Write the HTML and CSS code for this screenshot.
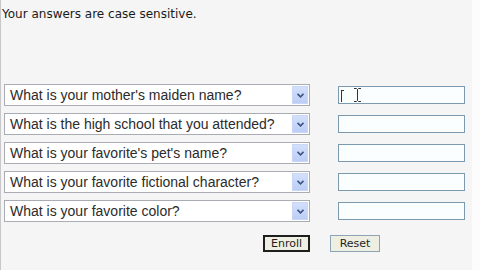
FILE: index.html
```html
<!DOCTYPE html>
<html>
<head>
    <title>Security Questions</title>
    <link rel="stylesheet" href="styles.css">
</head>
<body>
    <div class="page">
        <p class="note">Your answers are case sensitive.</p>

        <form class="questions">
            <div class="row">
                <div class="select">
                    <span class="select-text">What is your mother's maiden name?</span>
                    <span class="select-btn"><svg width="7" height="5" viewBox="0 0 7 5"><path d="M0.5 0.8 L3.5 3.8 L6.5 0.8" fill="none" stroke="#3d5480" stroke-width="1.6"/></svg></span>
                </div>
                <div class="answer-cell">
                    <input type="text" class="answer">
                    <svg class="ibeam" width="9" height="14" viewBox="0 0 9 14"><path d="M1 0.5 H3.5 L4.5 1.5 L5.5 0.5 H8 M4.5 1.5 V12.5 M1 13.5 H3.5 L4.5 12.5 L5.5 13.5 H8" fill="none" stroke="#333" stroke-width="1"/></svg>
                    <span class="caret"></span>
                </div>
            </div>
            <div class="row">
                <div class="select">
                    <span class="select-text">What is the high school that you attended?</span>
                    <span class="select-btn"><svg width="7" height="5" viewBox="0 0 7 5"><path d="M0.5 0.8 L3.5 3.8 L6.5 0.8" fill="none" stroke="#3d5480" stroke-width="1.6"/></svg></span>
                </div>
                <div class="answer-cell"><input type="text" class="answer"></div>
            </div>
            <div class="row">
                <div class="select">
                    <span class="select-text">What is your favorite's pet's name?</span>
                    <span class="select-btn"><svg width="7" height="5" viewBox="0 0 7 5"><path d="M0.5 0.8 L3.5 3.8 L6.5 0.8" fill="none" stroke="#3d5480" stroke-width="1.6"/></svg></span>
                </div>
                <div class="answer-cell"><input type="text" class="answer"></div>
            </div>
            <div class="row">
                <div class="select">
                    <span class="select-text">What is your favorite fictional character?</span>
                    <span class="select-btn"><svg width="7" height="5" viewBox="0 0 7 5"><path d="M0.5 0.8 L3.5 3.8 L6.5 0.8" fill="none" stroke="#3d5480" stroke-width="1.6"/></svg></span>
                </div>
                <div class="answer-cell"><input type="text" class="answer"></div>
            </div>
            <div class="row">
                <div class="select">
                    <span class="select-text">What is your favorite color?</span>
                    <span class="select-btn"><svg width="7" height="5" viewBox="0 0 7 5"><path d="M0.5 0.8 L3.5 3.8 L6.5 0.8" fill="none" stroke="#3d5480" stroke-width="1.6"/></svg></span>
                </div>
                <div class="answer-cell"><input type="text" class="answer"></div>
            </div>

            <div class="buttons">
                <button type="submit" class="btn btn-default">Enroll</button>
                <button type="reset" class="btn btn-reset">Reset</button>
            </div>
        </form>
    </div>
</body>
</html>
```

FILE: styles.css
```css
body {
    margin: 0;
    background-color: #fcfcfc;
    font-family: "DejaVu Sans", Verdana, sans-serif;
}
.page {
    width: 472px;
    height: 270px;
    background-color: #f5f5f5;
    border-left: 1px solid #c8c8c8;
    box-sizing: border-box;
}
.note {
    margin: 0;
    padding: 7px 0 0 1px;
    font-size: 12px;
    line-height: 14px;
    color: #1a1a1a;
}
.questions {
    margin-top: 63px;
    padding-left: 3px;
}
.row {
    display: flex;
    align-items: center;
    margin-bottom: 7px;
}
.select {
    display: flex;
    align-items: center;
    width: 306px;
    height: 22px;
    box-sizing: border-box;
    border: 1px solid #a9adb3;
    background-color: #fff;
    padding: 1px;
}
.select-text {
    flex: 1;
    padding-left: 4px;
    font-family: "Liberation Sans", Arial, sans-serif;
    font-size: 14px;
    color: #2b2b2b;
    white-space: nowrap;
    overflow: hidden;
}
.select-btn {
    display: flex;
    align-items: center;
    justify-content: center;
    width: 16px;
    height: 18px;
    background: linear-gradient(#d3e0fb, #bccdf7);
    border: 1px solid #c9d7f6;
    box-sizing: border-box;
}
.answer-cell {
    position: relative;
    margin-left: 28px;
}
.answer {
    display: block;
    width: 127px;
    height: 18px;
    box-sizing: border-box;
    border: 1px solid #7c9aae;
    background-color: #fbfeff;
    padding: 0;
}
.ibeam {
    position: absolute;
    left: 15px;
    top: 2px;
}
.caret {
    position: absolute;
    left: 3px;
    top: 4px;
    width: 2px;
    height: 11px;
    border-left: 1px solid #333;
    border-top: 1px solid #333;
}
.buttons {
    display: flex;
    gap: 20px;
    padding-left: 259px;
    margin-top: 13px;
}
.btn {
    width: 47px;
    height: 17px;
    padding: 0;
    font-family: "DejaVu Sans", Verdana, sans-serif;
    font-size: 11px;
    color: #1e1e1e;
    background-color: #efeee2;
    border: 1px solid #8ca3b3;
    line-height: 13px;
}
.btn-default {
    border: 2px solid #1e1e1e;
}
.btn-reset {
    width: 50px;
}
```
